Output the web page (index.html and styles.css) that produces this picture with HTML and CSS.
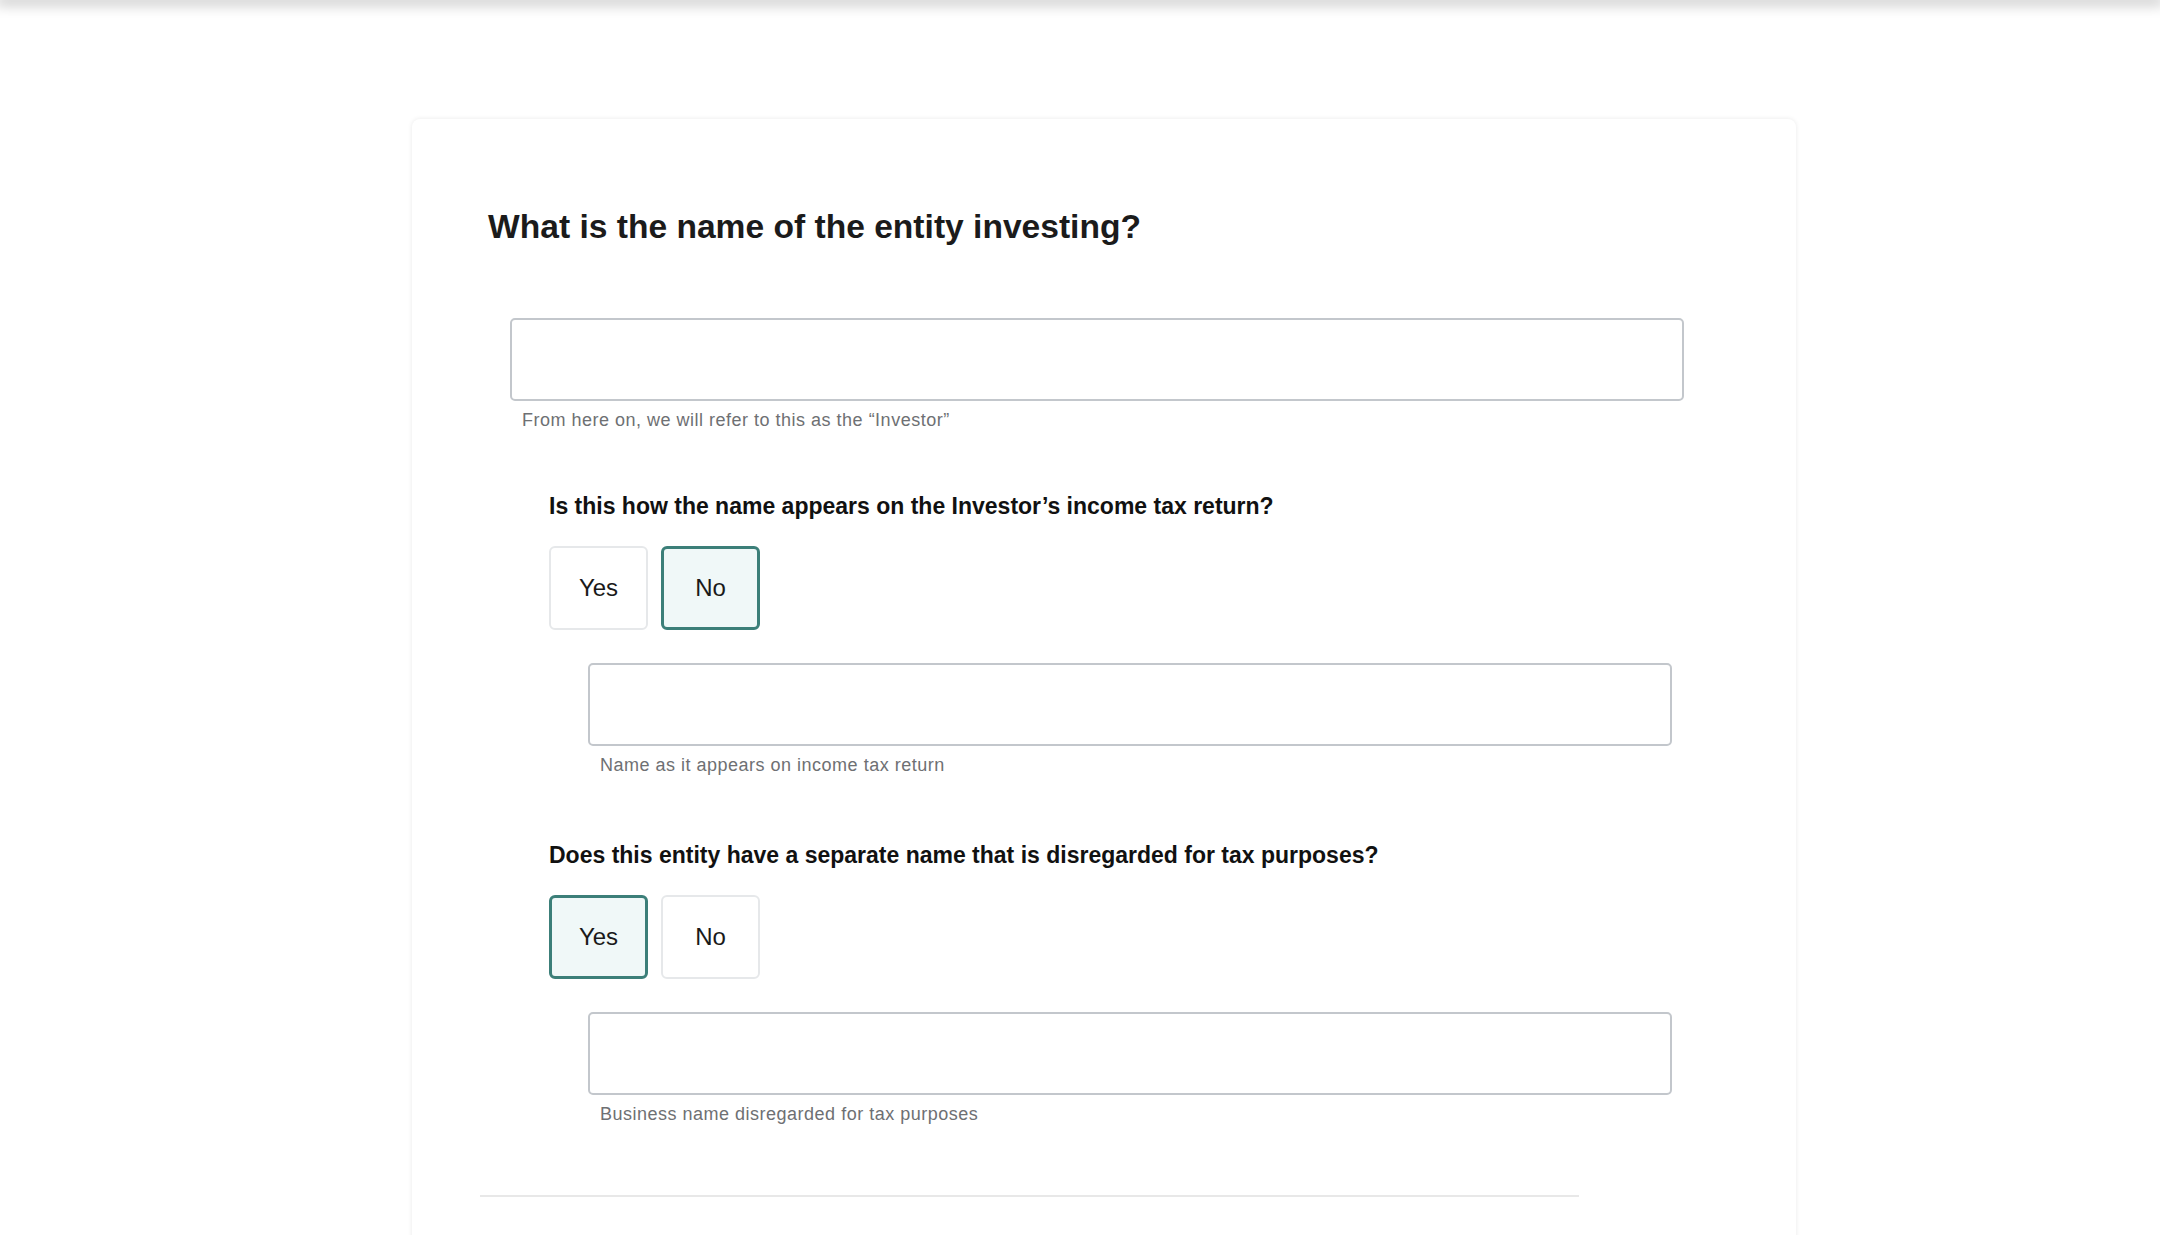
FILE: index.html
```html
<!DOCTYPE html>
<html lang="en">
<head>
  <meta charset="UTF-8">
  <meta name="viewport" content="width=device-width, initial-scale=1.0">
  <title>Investor Entity</title>
  <link rel="stylesheet" href="styles.css">
</head>
<body>

<div class="topbar"></div>

<main class="wrap">
  <section class="card">
    <h1 class="title">What is the name of the entity investing?</h1>

    <div class="field field-main">
      <input type="text" class="text-input">
      <p class="hint">From here on, we will refer to this as the “Investor”</p>
    </div>

    <div class="question q-first">
      <h2>Is this how the name appears on the Investor’s income tax return?</h2>
      <div class="choices">
        <button class="choice">Yes</button>
        <button class="choice selected">No</button>
      </div>
      <div class="field field-sub">
        <input type="text" class="text-input">
        <p class="hint">Name as it appears on income tax return</p>
      </div>
    </div>

    <div class="question q-second">
      <h2>Does this entity have a separate name that is disregarded for tax purposes?</h2>
      <div class="choices">
        <button class="choice selected">Yes</button>
        <button class="choice">No</button>
      </div>
      <div class="field field-sub">
        <input type="text" class="text-input">
        <p class="hint">Business name disregarded for tax purposes</p>
      </div>
    </div>

    <hr class="divider">
  </section>
</main>

</body>
</html>
```

FILE: styles.css
```css
body {
  font-family: "Liberation Sans", Arial, sans-serif;
  margin: 0;
  padding: 0;
  background-color: #fff;
  color: #161616;
  overflow: hidden;
}
.topbar {
  height: 0;
  box-shadow: 0 0 14px 4px rgba(0, 0, 0, 0.28);
  position: relative;
  z-index: 2;
}
.wrap {
  padding: 119px 0 0 412px;
}
.card {
  width: 1384px;
  box-sizing: border-box;
  min-height: 1200px;
  padding: 88px 0 0 76px;
  background-color: #fff;
  border-radius: 8px;
  box-shadow: 0 0 5px rgba(0, 0, 0, 0.09);
}
.title {
  margin: 0;
  font-size: 33.6px;
  line-height: 40px;
  font-weight: 700;
  color: #1b1b1b;
}
.field-main {
  margin: 71px 0 0 22px;
  width: 1174px;
}
.text-input {
  display: block;
  width: 100%;
  height: 83px;
  box-sizing: border-box;
  border: 2px solid #c3c7cc;
  border-radius: 5px;
  background: #fff;
}
.hint {
  margin: 7px 0 0;
  padding-left: 12px;
  font-size: 18px;
  line-height: 24px;
  letter-spacing: 0.5px;
  color: #6e7073;
}
.question {
  margin-left: 61px;
}
.q-first {
  margin-top: 59px;
}
.q-second {
  margin-top: 63px;
}
.question h2 {
  margin: 0;
  font-size: 23px;
  line-height: 30px;
  font-weight: 700;
  color: #111;
}
.choices {
  display: flex;
  gap: 13px;
  margin-top: 25px;
}
.choice {
  width: 99px;
  height: 84px;
  box-sizing: border-box;
  background: #fff;
  border: 2px solid #e6e8ea;
  border-radius: 6px;
  font-family: inherit;
  font-size: 24px;
  color: #1a1a1a;
  cursor: pointer;
}
.choice.selected {
  background-color: #f0f8f8;
  border: 3px solid #3c7f79;
}
.field-sub {
  margin: 33px 0 0 39px;
  width: 1084px;
}
.divider {
  margin: 69px 0 0 -8px;
  width: 1099px;
  border: none;
  border-top: 2px solid #e8e8e8;
}
```
